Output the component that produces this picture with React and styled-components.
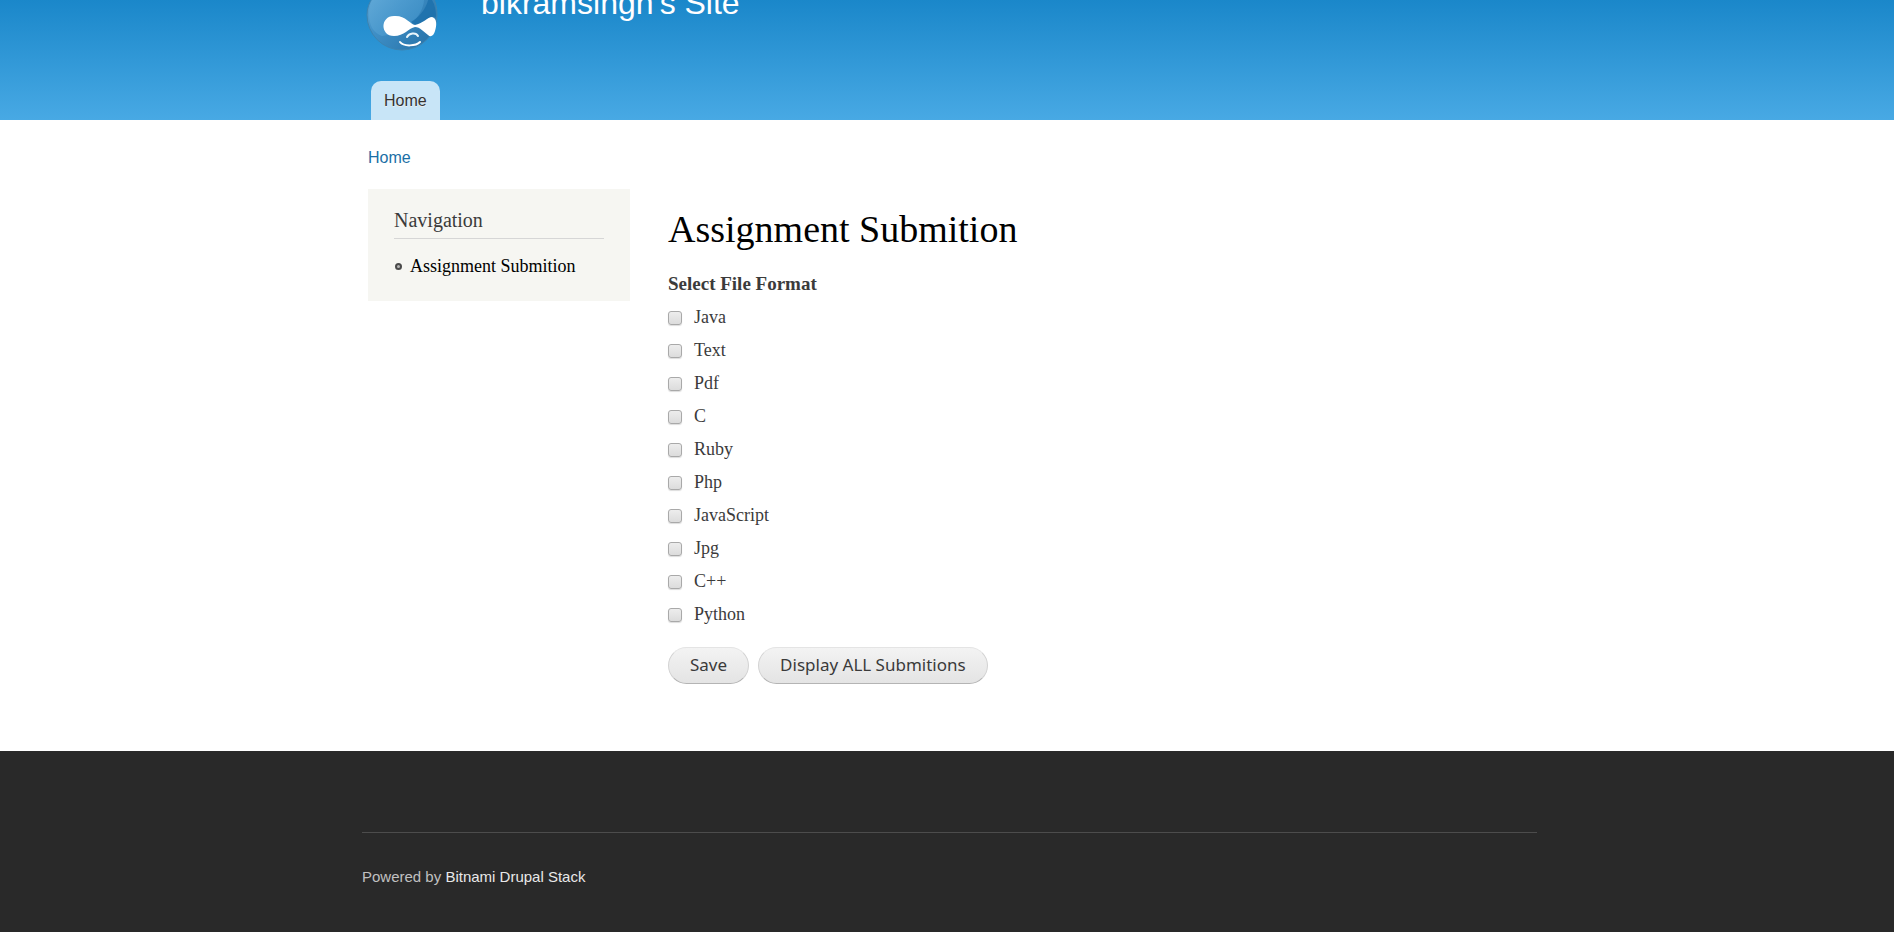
import React from 'react';
import styled, { createGlobalStyle } from 'styled-components';

const serif = '"Liberation Serif", serif';
const sans = '"Liberation Sans", Arial, sans-serif';

const GlobalStyle = createGlobalStyle`
  *, *::before, *::after { box-sizing: border-box; }
  body {
    margin: 0;
    color: #3b3b3b;
    background: #fff;
    font-family: ${serif};
    font-size: 18px;
  }
  h1, h2, p, ul, fieldset { margin: 0; padding: 0; }
  a { text-decoration: none; }
`;

const Page = styled.div`
  display: flex;
  flex-direction: column;
  min-height: 100vh;
`;

const Container = styled.div`
  width: 100%;
  max-width: 1180px;
  margin: 0 auto;
  padding: 0 0 0 ${(p) => p.$inset || '11px'};
`;

const Header = styled.header`
  margin-top: -50px;
  background: linear-gradient(to bottom, #0779bf 0%, #48a9e4 100%);
  font-family: ${sans};
`;

const HeaderInner = styled(Container)`
  display: flex;
  flex-direction: column;
  justify-content: space-between;
  height: 170px;
  padding-top: 18px;
`;

const Branding = styled.div`
  display: flex;
  align-items: flex-start;
  gap: 39px;
`;

const LogoLink = styled.a`
  display: block;
  height: 84px;
  svg { display: block; }
`;

const SiteName = styled.a`
  padding-top: 17px;
  color: #fffeff;
  font-size: 32px;
  line-height: 36px;
`;

const TabBar = styled.nav`
  display: flex;
  padding-left: 3px;
`;

const Tab = styled.a`
  padding: 0 13px;
  border-radius: 10px 10px 0 0;
  background: #c8e5f7;
  color: #333;
  font-size: 16px;
  line-height: 39px;
  text-shadow: 0 1px #eee;
`;

const Breadcrumb = styled.nav`
  padding: 28px 0 22px;
  font-family: ${sans};
  font-size: 16px;
  line-height: 19px;
  a { color: #1a6fa6; }
`;

const Columns = styled.div`
  display: flex;
  align-items: flex-start;
  gap: 38px;
`;

const Sidebar = styled.aside`
  flex: 0 0 262px;
  padding: 19px 26px 21px;
  background: #f6f6f2;
`;

const BlockTitle = styled.h2`
  padding-bottom: 5px;
  border-bottom: 1px solid #d6d6d6;
  font-size: 20px;
  font-weight: normal;
  line-height: 25px;
`;

const Menu = styled.ul`
  padding-top: 14px;
  list-style: none;
`;

const MenuItem = styled.li`
  display: flex;
  align-items: center;
  gap: 8px;
  padding-left: 1px;
  line-height: 27px;
  white-space: nowrap;
  &::before {
    content: "";
    flex: none;
    width: 7px;
    height: 7px;
    border: 2px solid #4a4a4a;
    border-radius: 50%;
    background: #b5b5b5;
  }
  a { color: #000; }
`;

const Content = styled.main`
  flex: 1;
  padding: 18px 0 67px;
`;

const PageTitle = styled.h1`
  color: #000;
  font-size: 38px;
  font-weight: normal;
  line-height: 44px;
`;

const Formats = styled.fieldset`
  border: 0;
  padding-top: 18px;
  legend {
    float: left;
    width: 100%;
    padding: 0 0 2px;
    font-size: 19px;
    font-weight: bold;
    line-height: 30px;
  }
`;

const Option = styled.label`
  display: flex;
  align-items: center;
  gap: 12px;
  clear: both;
  height: 33px;
`;

const Checkbox = styled.input`
  appearance: none;
  width: 14px;
  height: 14px;
  margin: 0;
  border: 1px solid #a9a9a9;
  border-radius: 3px;
  background: linear-gradient(#ededed, #dcdcdc);
  box-shadow: 0 1px 1px #ddd;
  &:checked { background: #4a4a4a; }
`;

const Actions = styled.div`
  display: flex;
  gap: 9px;
  padding-top: 16px;
`;

const Button = styled.button`
  height: 37px;
  padding: 0 21px 1px;
  border: 1px solid;
  border-color: #e4e4e4 #d2d2d2 #b4b4b4;
  border-radius: 19px;
  background: linear-gradient(#f3f3f3, #e4e4e4);
  color: #3a3a3a;
  font-family: "Noto Sans", sans-serif;
  font-size: 17px;
  line-height: 24px;
`;

const Footer = styled.footer`
  flex: 1;
  padding: 81px 0 40px;
  background: #292929;
  color: #c0c0c0;
  font-family: ${sans};
  font-size: 15px;
`;

const Credit = styled.p`
  padding: 35px 0 5px;
  border-top: 1px solid #4c4c4c;
  line-height: 18px;
  a { color: #e8e8e8; }
`;

function Logo() {
  return (
    <svg width="74" height="84" viewBox="1 -32 74 84" aria-hidden="true" overflow="visible">
      <defs>
        <linearGradient id="drop" x1="0" y1="0" x2="1" y2="1">
          <stop offset="0" stopColor="#6db1dc" />
          <stop offset="0.45" stopColor="#3f8fc6" />
          <stop offset="1" stopColor="#246fa5" />
        </linearGradient>
        <linearGradient id="shine" x1="0" y1="0" x2="1" y2="1">
          <stop offset="0" stopColor="#6db1dc" />
          <stop offset="1" stopColor="#3a8fc8" />
        </linearGradient>
      </defs>
      <path d="M42-31C36-19 0-13 0 15a35 35 0 0 0 70 0C70-13 48-15 42-31Z" fill="url(#drop)" stroke="#3d83b0" strokeWidth="1" />
      <path d="M42-29C28-18 2-12 2 14C2 26 7 33 15 36C40 33 56 16 57 0C56-12 48-20 42-29Z" fill="url(#shine)" opacity="0.7" />
      <path d="M62-4C60 9 52 17 44 22L50 26C59 18 67 16 69 17C69 9 67 1 62-4Z" fill="#1b6fab" opacity="0.8" />
      <path d="M27 16C38 15 43 24 48 25C55 24 61 17 65 17C70 18 70 25 68 31C67 35 64 38 61 35C57 32 53 27 48 27C42 28 37 36 27 36C13 36 13 16 27 16Z" fill="#fff" />
      <path d="M40 37C42 33 49 32 51 36" fill="none" stroke="#eaf6fc" strokeWidth="2" strokeLinecap="round" />
      <path d="M33 42C37 47 49 46 53 42" fill="none" stroke="#fff" strokeWidth="2" strokeLinecap="round" />
    </svg>
  );
}

const formats = ['Java', 'Text', 'Pdf', 'C', 'Ruby', 'Php', 'JavaScript', 'Jpg', 'C++', 'Python'];

export default function App() {
  return (
    <Page>
      <GlobalStyle />
      <Header>
        <HeaderInner>
          <Branding>
            <LogoLink href="#" aria-label="Site home"><Logo /></LogoLink>
            <SiteName href="#">bikramsingh's Site</SiteName>
          </Branding>
          <TabBar aria-label="Main menu">
            <Tab href="#">Home</Tab>
          </TabBar>
        </HeaderInner>
      </Header>
      <Container>
        <Breadcrumb aria-label="Breadcrumb"><a href="#">Home</a></Breadcrumb>
        <Columns>
          <Sidebar>
            <BlockTitle>Navigation</BlockTitle>
            <Menu>
              <MenuItem><a href="#">Assignment Submition</a></MenuItem>
            </Menu>
          </Sidebar>
          <Content>
            <PageTitle>Assignment Submition</PageTitle>
            <form onSubmit={(e) => e.preventDefault()}>
              <Formats>
                <legend>Select File Format</legend>
                {formats.map((name) => (
                  <Option key={name}>
                    <Checkbox type="checkbox" name="format" value={name} />
                    {name}
                  </Option>
                ))}
              </Formats>
              <Actions>
                <Button type="submit">Save</Button>
                <Button type="button">Display ALL Submitions</Button>
              </Actions>
            </form>
          </Content>
        </Columns>
      </Container>
      <Footer>
        <Container $inset="5px">
          <Credit>Powered by <a href="#">Bitnami Drupal Stack</a></Credit>
        </Container>
      </Footer>
    </Page>
  );
}
